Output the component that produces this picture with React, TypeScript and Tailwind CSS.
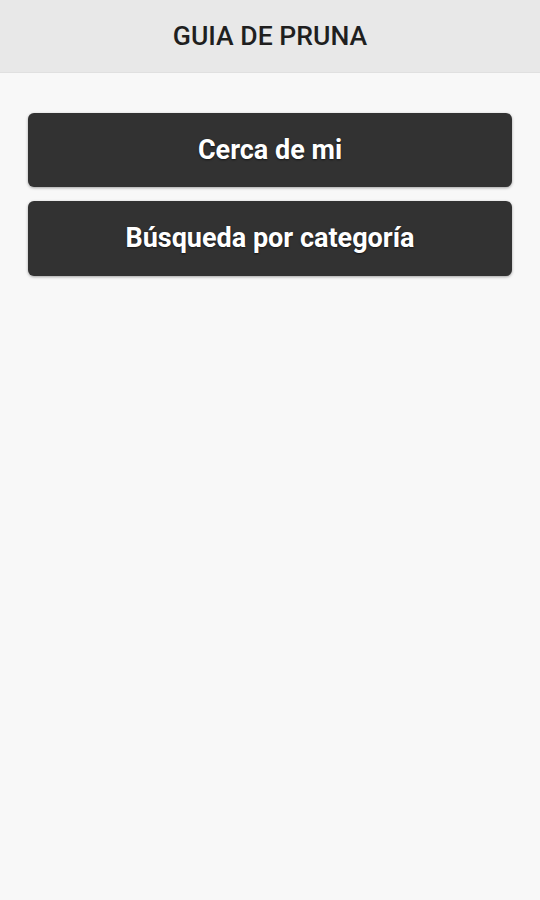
export default function App() {
  return (
    <div className="min-h-[900px] bg-[#f8f8f8] font-['Roboto',sans-serif]">
      <header className="h-[73px] bg-[#e8e8e8] border-b border-[#e0e0e0] flex items-center justify-center">
        <h1 className="text-[26.6px] font-medium text-[#1f1f1f]">GUIA DE PRUNA</h1>
      </header>
      <div className="px-[28px] pt-[40px] flex flex-col gap-[14px]">
        <button className="h-[74px] w-full rounded-[6px] bg-[#323232] text-white text-[27px] font-bold shadow-[0_1px_3px_rgba(0,0,0,0.35)] [text-shadow:0_1px_2px_rgba(0,0,0,0.6)]">
          Cerca de mi
        </button>
        <button className="h-[75px] w-full rounded-[6px] bg-[#323232] text-white text-[27px] font-bold shadow-[0_1px_3px_rgba(0,0,0,0.35)] [text-shadow:0_1px_2px_rgba(0,0,0,0.6)]">
          Búsqueda por categoría
        </button>
      </div>
    </div>
  );
}
